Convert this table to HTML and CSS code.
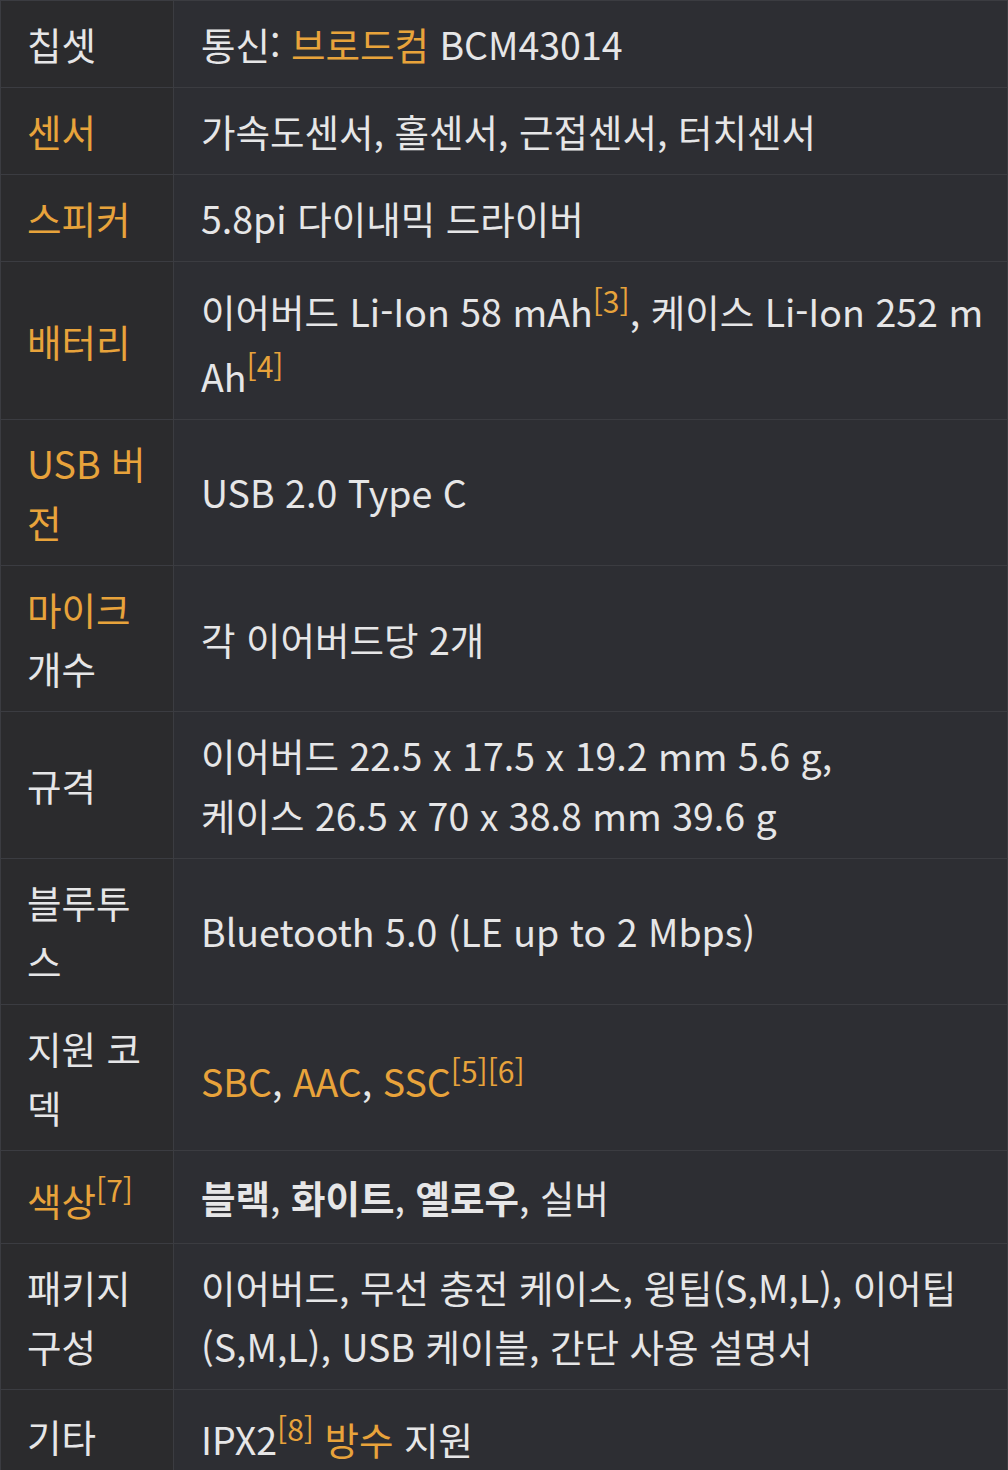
FILE: index.html
```html
<!DOCTYPE html>
<html lang="ko">
<head>
<meta charset="utf-8">
<link rel="stylesheet" href="styles.css">
</head>
<body>
<table class="spec">
  <colgroup><col class="c-label"><col class="c-value"></colgroup>
  <tbody>
    <tr><th>칩셋</th><td>통신: <a>브로드컴</a> BCM43014</td></tr>
    <tr><th><a>센서</a></th><td>가속도센서, 홀센서, 근접센서, 터치센서</td></tr>
    <tr><th><a>스피커</a></th><td>5.8pi 다이내믹 드라이버</td></tr>
    <tr><th><a>배터리</a></th><td>이어버드 Li-Ion 58 mAh<sup><a>[3]</a></sup>, 케이스 Li-Ion 252 mAh<sup><a>[4]</a></sup></td></tr>
    <tr><th><a>USB 버전</a></th><td>USB 2.0 Type C</td></tr>
    <tr><th><a>마이크</a> 개수</th><td>각 이어버드당 2개</td></tr>
    <tr><th>규격</th><td>이어버드 22.5 x 17.5 x 19.2 mm 5.6 g,<br>케이스 26.5 x 70 x 38.8 mm 39.6 g</td></tr>
    <tr><th>블루투스</th><td>Bluetooth 5.0 (LE up to 2 Mbps)</td></tr>
    <tr><th>지원 코덱</th><td><a>SBC</a>, <a>AAC</a>, <a>SSC</a><sup><a>[5]</a><a>[6]</a></sup></td></tr>
    <tr><th><a>색상</a><sup><a>[7]</a></sup></th><td><b>블랙</b>, <b>화이트</b>, <b>옐로우</b>, 실버</td></tr>
    <tr><th>패키지 구성</th><td>이어버드, 무선 충전 케이스, 윙팁(S,M,L), 이어팁(S,M,L), USB 케이블, 간단 사용 설명서</td></tr>
    <tr><th>기타</th><td>IPX2<sup><a>[8]</a></sup> <a>방수</a> 지원</td></tr>
  </tbody>
</table>
</body>
</html>
```
FILE: styles.css
```css
html, body {
  margin: 0;
  padding: 0;
  background: #2d2e33;
}
body {
  font-family: "Noto Sans CJK KR", "Noto Sans", sans-serif;
  font-size: 37.5px;
  line-height: 59.15px;
  color: #e6e6e7;
}
.spec {
  width: 1008px;
  border-collapse: collapse;
  table-layout: fixed;
}
.c-label { width: 173px; }
.spec th, .spec td {
  border: 1px solid #3b3c41;
  padding: 13px 27px 14px 27px;
  text-align: left;
  vertical-align: middle;
  font-weight: 400;
}
.spec th {
  background: #2b2b2d;
  padding-left: 26px;
}
.spec td {
  background: #2d2e33;
  padding-right: 23px;
  word-break: break-all;
}
.spec a {
  color: #e8a33b;
}
.spec b {
  font-weight: 700;
}
.spec sup {
  font-size: 0.8em;
  line-height: 50px;
  vertical-align: super;
}
```
